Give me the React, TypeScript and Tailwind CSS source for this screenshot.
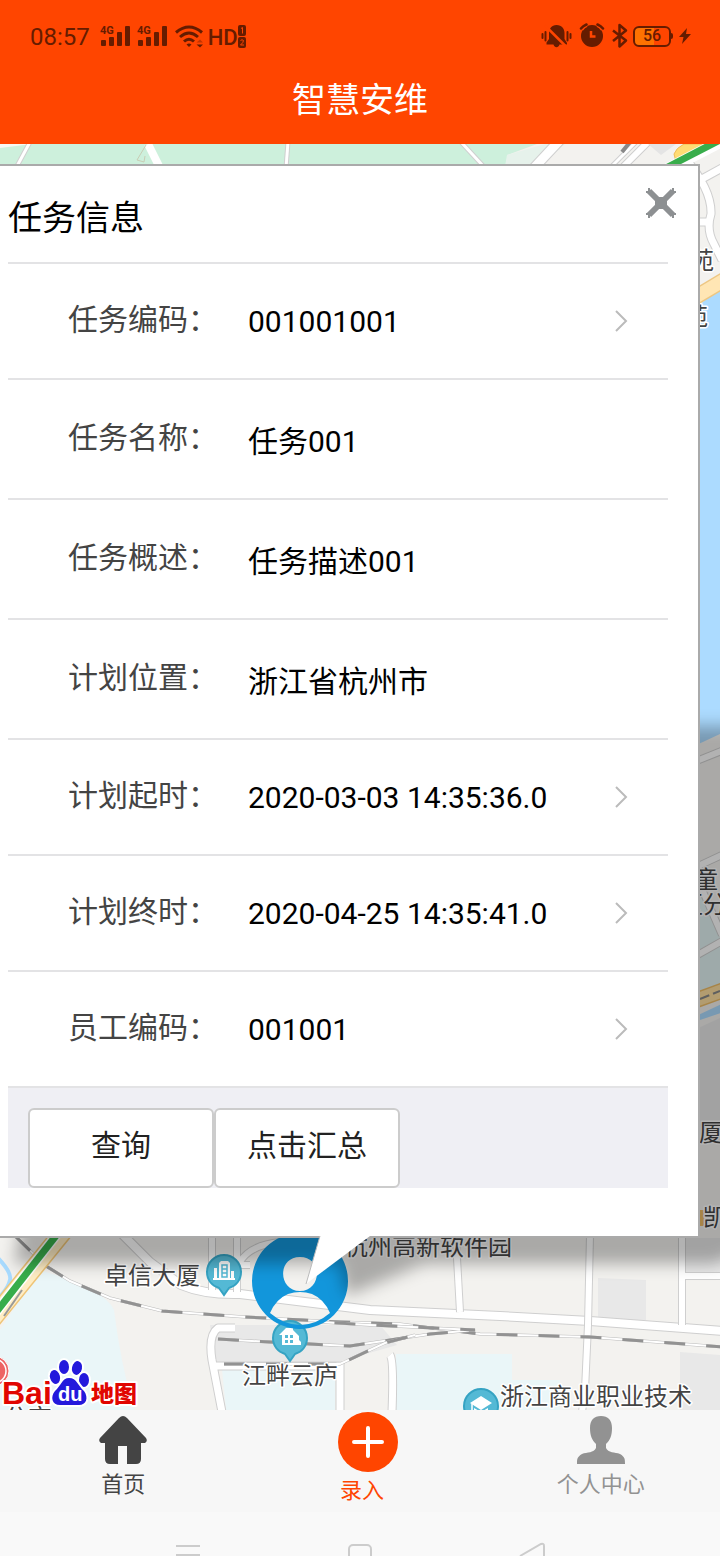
import { useState } from "react";

const FONT = "font-[Roboto,'Noto_Sans_CJK_SC',sans-serif]";

const fields = [
    { name: "taskCode", label: "任务编码：", value: "001001001", picker: true },
    { name: "taskName", label: "任务名称：", value: "任务001", picker: false },
    { name: "taskDesc", label: "任务概述：", value: "任务描述001", picker: false },
    { name: "location", label: "计划位置：", value: "浙江省杭州市", picker: false },
    { name: "startTime", label: "计划起时：", value: "2020-03-03 14:35:36.0", picker: true },
    { name: "endTime", label: "计划终时：", value: "2020-04-25 14:35:41.0", picker: true },
    { name: "staffCode", label: "员工编码：", value: "001001", picker: true },
];

const Signal = () => (
    <svg width="30" height="24" viewBox="0 0 30 24" fill="#661c00" aria-hidden="true">
        <text x="0" y="10" fontSize="11" fontWeight="700" fontFamily="Roboto">4G</text>
        <rect x="1" y="16" width="5" height="6" rx="1" />
        <rect x="9" y="13" width="5" height="9" rx="1" />
        <rect x="17" y="8" width="5" height="14" rx="1" />
        <rect x="25" y="2" width="5" height="20" rx="1" />
    </svg>
);

const StatusBar = () => (
    <div className="flex h-[72px] items-center justify-between pl-[30px] pr-[29px] text-[#661c00]">
        <div className="flex items-center">
            <span className="pt-0.5 text-2xl">08:57</span>
            <span className="ml-2.5 flex gap-[7px]">
                <Signal />
                <Signal />
            </span>
            <svg className="ml-2" width="29" height="24" viewBox="0 0 29 24" fill="none" stroke="#661c00" strokeWidth="3" aria-hidden="true">
                <path d="M1 8.5Q14 -2.500 27 8.500" />
                <path d="M5 13Q14 5 23 13" />
                <path d="M9 17.500Q14 13 19 17.500" />
                <path d="M14 23L11.500 20.500Q14 18.500 16.500 20.500Z" fill="#661c00" stroke="none" />
                <path d="M21.500 20.500H28L25 23.500Z" fill="#661c00" stroke="none" />
                <path d="M21.500 18.500H28L25 15.500Z" fill="#661c00" fillOpacity=".4" stroke="none" />
            </svg>
            <span className="ml-1 pt-0.5 text-[22px] font-medium">HD</span>
            <svg width="9" height="24" viewBox="0 0 9 24" fill="#661c00" aria-hidden="true">
                <rect width="8" height="11" y="1" rx="2" />
                <rect width="8" height="11" y="13" rx="2" />
                <path d="M3 4.500L4.500 3.500V9.500M2.500 16.500Q4 15 5.500 16.500Q5.500 18.500 2.500 21H6" stroke="#ff4500" strokeWidth="1" fill="none" />
            </svg>
        </div>
        <div className="flex items-center">
            <svg width="31" height="26" viewBox="0 0 31 26" fill="#661c00" aria-hidden="true">
                <path d="M15.500 2C21 2 23.500 6 23.500 10V16L26 20V21.500H18.500C17.500 25 13.500 25 12.500 21.500H5.500V19.500L8 16V10C8 6 10.500 2 15.500 2Z" />
                <path d="M4 2.500L24.500 23" stroke="#ff4500" strokeWidth="2.500" />
                <path d="M1.500 11V15M4.500 9V17.500M26.500 9V17.500M29.500 11V15" stroke="#661c00" strokeWidth="2" strokeLinecap="round" />
            </svg>
            <svg className="ml-[7px]" width="26" height="26" viewBox="0 0 26 26" fill="none" aria-hidden="true">
                <circle cx="13" cy="13" r="11" fill="#661c00" />
                <path d="M2 6Q4 3 7.500 1.500M24 6Q22 3 18.500 1.500" stroke="#ff4500" strokeWidth="5" />
                <path d="M2 5.500Q4 3 7.500 1.500M24 5.500Q22 3 18.500 1.500" stroke="#661c00" strokeWidth="2.500" strokeLinecap="round" />
                <path d="M12 8V13.500H16.500" stroke="#ff4500" strokeWidth="2.500" />
            </svg>
            <svg className="ml-1.5" width="18" height="26" viewBox="0 0 18 26" fill="none" stroke="#661c00" strokeWidth="2.500" aria-hidden="true">
                <path d="M2 7.500L15 17.500L8.500 23.500V2L15 7.500L2 18" strokeLinejoin="round" />
            </svg>
            <span className="ml-1 flex h-[21px] w-[38px] items-center justify-center rounded-md border-2 border-[#661c00] bg-linear-to-r from-[#ff7200] from-56% to-[#ff4500] to-56% text-[16px] font-medium leading-none">56</span>
            <span className="h-1.5 w-0.5 rounded-r bg-[#661c00]" />
            <svg className="ml-1.5" width="12" height="16" viewBox="0 0 12 16" fill="#661c00" aria-hidden="true">
                <path d="M8 0L0 9H4.500L3 16L12 6H7Z" />
            </svg>
        </div>
    </div>
);

// casing + fill for a plain street
const Road = ({ d, w = 12 }: { d: string; w?: number }) => (
    <g fill="none" strokeLinejoin="round">
        <path d={d} stroke="#cfcfcf" strokeWidth={w + 2} />
        <path d={d} stroke="#fff" strokeWidth={w} />
    </g>
);

const Rail = ({ d }: { d: string }) => (
    <g fill="none">
        <path d={d} stroke="#bbb" strokeWidth="3" />
        <path d={d} stroke="#fff" strokeWidth="2" />
        <path d={d} stroke="#929292" strokeWidth="3" strokeDasharray="21 21" />
    </g>
);

const Place = ({ x, y, children }: { x: number; y: number; children: string }) => (
    <text x={x} y={y} fontSize="24" fill="#444" stroke="#fff" strokeWidth="3" paintOrder="stroke" strokeLinejoin="round">{children}</text>
);

const Pin = ({ x, y, children }: { x: number; y: number; children: React.ReactNode }) => (
    <g transform={`translate(${x} ${y})`}>
        <path d="M-17 0A17 17 0 1 1 17 0C17 8 12 14 5 16L0 23L-5 16C-12 14 -17 8 -17 0Z" fill="#54b9d5" stroke="#35a3c3" strokeWidth="2" />
        <g fill="#fff">{children}</g>
    </g>
);

const MapCanvas = () => (
    <svg className="absolute inset-0 h-full w-full" viewBox="0 144 720 1266" preserveAspectRatio="xMaxYMax slice" role="img" aria-label="地图">
        <defs>
            <filter id="soft" x="-20%" y="-20%" width="140%" height="140%">
                <feGaussianBlur stdDeviation="8" />
            </filter>
        </defs>
        <rect y="144" width="720" height="1266" fill="#f3f2ef" />

        {/* north strip */}
        <path d="M0 144H537L507 155V166H0Z" fill="#cdf0dc" />
        <path d="M507 155L545 144H565L540 166H505Z" fill="#e6f2eb" />
        <path d="M0 144H32L0 148Z" fill="#f8f8f3" />
        <Road d="M30 142L16 168" w={3} />
        <path d="M148 144L161 170" stroke="#fff" strokeWidth="8" />
        <path d="M146 145L137 160L144 162L145 156" fill="none" stroke="#c8cdb5" />
        <Road d="M288 142L286 168" w={3} />
        <Road d="M461 142L485 168" w={3} />
        <Road d="M560 140L532 170" w={9} />
        <Road d="M638 140L608 170" w={3} />
        <path d="M630 142L622 152" stroke="#888" strokeWidth="4" />
        <Road d="M650 140L620 170" w={6} />
        <path d="M648 144H676L661 155Z" fill="#e4e4e4" />
        <path d="M674 154Q676 148 684 144H708L676 162Z" fill="#ffdc73" stroke="#eebc58" />
        <Road d="M685 158Q712 190 711 214Q706 230 714 244L722 260M700 180L722 168M698 222H710" w={7} />
        <path d="M662 172L720 142" stroke="#fff" strokeWidth="12" />
        <path d="M662 170L720 140" stroke="#38ad4b" strokeWidth="7" />
        <path d="M690 300L720 286V734L690 748Z" fill="#acdbff" />
        <path d="M690 314V290L720 276V286Z" fill="#f3f2ef" />
        <path d="M694 298L724 280" stroke="#edc783" strokeWidth="16" />
        <path d="M694 298L724 280" stroke="#ffe6b4" strokeWidth="13" />

        {/* east strip */}
        <path d="M694 863L720 938V1000H694Z" fill="#e2f3f3" />
        <Road d="M694 762L724 750M694 868L724 854M698 880L722 935M694 957L724 940" w={6} />
        <path d="M694 1001L724 990" stroke="#efbd67" strokeWidth="16" />
        <path d="M694 1001L724 990" stroke="#ffe0a0" strokeWidth="13" />
        <path d="M700 999L720 991" stroke="#888" strokeDasharray="10 4" strokeWidth="2" />
        <path d="M694 1017L724 1003V1012L694 1022Z" fill="#acdbff" />
        <path d="M694 1030L720 1018V1140H694Z" fill="#e8e8e8" />

        {/* south area */}
        <path d="M0 1330L40 1270Q106 1290 114 1310Q120 1360 134 1410H0Z" fill="#eaf6f8" />
        <path d="M210 1325H380L397 1345L345 1360L330 1364L215 1366Z" fill="#e8e8e8" />
        <path d="M222 1369H335V1410H226Z" fill="#eaf6f8" />
        <path d="M396 1354H512V1380H560V1410H396Z" fill="#eaf6f8" />
        <path d="M598 1278L646 1280V1320H598ZM680 1352L720 1355V1410H680ZM686 1238H720V1272H686Z" fill="#e8e8e8" />
        <path d="M-4 1256Q12 1272 10 1280Q8 1290 -4 1300" fill="none" stroke="#a8dbff" strokeWidth="4" />
        <Road d="M118 1230L150 1262L181 1285Q205 1295 240 1294L370 1310L500 1316L590 1321L724 1331" w={8} />
        <Road d="M212 1235V1290M237 1235V1292M212 1265H250M240 1262Q250 1245 280 1242" w={6} />
        <Road d="M456 1240L460 1312M590 1235L588 1325L585 1390L582 1412M682 1235V1325M682 1276H724" w={6} />
        <Road d="M235 1328H218Q208 1335 212 1360L222 1412M215 1366H342M340 1362V1412M390 1355Q394 1360 392 1412" w={7} />
        <Rail d="M15 1236L46 1266L70 1281L110 1298L162 1311L245 1317L340 1322L400 1324L480 1334L590 1337L724 1347" />
        <Rail d="M218 1339L270 1342L350 1346L430 1334L475 1330L370 1325L320 1322" />
        <Rail d="M224 1364H340L385 1343L415 1335" />
        <path d="M-10 1322L68 1226" stroke="#efc476" strokeWidth="19" />
        <path d="M-10 1322L68 1226" stroke="#ffedc4" strokeWidth="16" />
        <path d="M-10 1320L62 1228" stroke="#fff" strokeWidth="10" />
        <path d="M-10 1320L62 1228" stroke="#38ad4b" strokeWidth="7" />
        <path d="M4 1316L22 1290" stroke="#999" strokeWidth="2" />

        <Place x={690} y={269}>苑</Place>
        <Place x={684} y={325}>苑</Place>
        <Place x={694} y={888}>童</Place>
        <Place x={679} y={913}>区分</Place>
        <Place x={699} y={1141}>厦</Place>
        <path d="M698 1210H706V1226H698Z" fill="#efbd67" />
        <Place x={703} y={1226}>凯</Place>
        <Place x={104} y={1284}>卓信大厦</Place>
        <Place x={344} y={1255}>杭州高新软件园</Place>
        <Place x={242} y={1384}>江畔云庐</Place>
        <Place x={500} y={1405}>浙江商业职业技术</Place>
        <Place x={4} y={1426}>公交</Place>

        <Pin x={224} y={1272}>
            <path d="M-10 7V-4H-7V7ZM-5 7V-9L-3 -11H4L6 -9V7ZM7 7V-1H10V7ZM-11 6H11V8H-11Z" />
            <path d="M-2 -7H3V5H-2ZM-2 -3H3M-2 1H3" stroke="#54b9d5" strokeWidth="1.500" />
        </Pin>
        <Pin x={290} y={1338}>
            <path d="M-11 -3L-4 -10H3V-8L9 -2V2L11 4V7H-8V-3Z" />
            <path d="M-5 -3H-2V0H-5ZM0 -3H3V0H0ZM-5 2H-2V5H-5ZM0 2H3V5H0Z" fill="#54b9d5" />
        </Pin>
        <Pin x={481} y={1406}>
            <path d="M0 -10L11 -3L0 4L-11 -3ZM-7 2L0 6L7 2V10H-7Z" />
            <path d="M-9 -2V6" stroke="#fff" strokeWidth="1.500" />
        </Pin>
        <path d="M252 1281A48 48 0 1 0 348 1281A48 48 0 1 0 252 1281ZM300 1257C323 1257 322 1291 300 1291C278 1291 277 1257 300 1257ZM270 1313Q276 1299 288 1294Q300 1290 312 1294Q324 1299 330 1313Q316 1325 300 1325Q284 1325 270 1313Z" fill="#1296db" fillRule="evenodd" />

        {/* info window shadow */}
        <path d="M14 1264L34 1150H680V726H780V1230L716 1264H424L346 1296L340 1264Z" fill="#000" fillOpacity=".3" filter="url(#soft)" />

        {/* Baidu mark */}
        <circle cx="-6" cy="1371" r="15" fill="#ed6464" stroke="#fff" />
        <circle cx="-6" cy="1371" r="12" fill="none" stroke="#fff" strokeWidth="1.500" />
        <g stroke="#fff" strokeWidth="4" paintOrder="stroke" strokeLinejoin="round">
            <text x="2" y="1404" fontSize="32" fontWeight="700" fontFamily="Liberation Sans" fill="#e10601">Bai</text>
            <g fill="#2319dc">
                <ellipse cx="64" cy="1367" rx="5" ry="7" />
                <ellipse cx="77" cy="1368" rx="5" ry="7" transform="rotate(12 77 1368)" />
                <ellipse cx="55" cy="1377" rx="5" ry="7" transform="rotate(-15 55 1377)" />
                <ellipse cx="84" cy="1380" rx="5" ry="7" />
                <path d="M69 1378C77 1378 78 1386 84 1391C89 1398 86 1405 79 1405H60C52 1405 50 1397 55 1391C61 1386 62 1378 69 1378Z" />
            </g>
            <text x="91" y="1402" fontSize="23" fontWeight="900" fill="#e10601">地图</text>
        </g>
        <text x="58" y="1401" fontSize="20" fontWeight="700" fontFamily="Liberation Sans" fill="#fff">du</text>
    </svg>
);

const App = () => {
    const [open, setOpen] = useState(true);
    const [values, setValues] = useState<Record<string, string>>(
        Object.fromEntries(fields.map((f) => [f.name, f.value]))
    );

    return (
        <div className={`flex min-h-screen w-full flex-col overflow-hidden bg-[#f7f7f7] ${FONT}`}>
            <header className="bg-[#ff4500]">
                <StatusBar />
                <h1 className="flex h-[72px] items-center justify-center pb-4 text-[34px] leading-none text-white">智慧安维</h1>
            </header>

            <main className="relative pb-[172px] pr-5 pt-5">
                <MapCanvas />
                {open ? (
                    <section className="relative border-y-2 border-r-2 border-[#aaa] bg-white pb-12">
                        <div className="flex h-24 items-start justify-between pl-2 pr-[22px]">
                            <h2 className="pt-[35px] text-[34px] leading-[34px] text-black">任务信息</h2>
                            <button type="button" aria-label="关闭" onClick={() => setOpen(false)} className="mt-[22px]">
                                <svg width="30" height="30" viewBox="0 0 30 30" fill="none" stroke="#8d9092" strokeWidth="6">
                                    <path d="M3 3L27 27M27 3L3 27" />
                                    <path d="M3 0V6M0 4H6M27 0V6M24 4H30M3 24V30M0 26H6M27 24V30M24 26H30" strokeWidth="2" />
                                    <path d="M9 15H21M15 9V21" />
                                </svg>
                            </button>
                        </div>
                        <form onSubmit={(e) => e.preventDefault()} className="pl-2 pr-[30px]">
                            {fields.map((f) => (
                                <div
                                    key={f.name}
                                    className={f.picker ? "flex h-[116px] items-center border-t-2 border-[#e3e3e5] pl-[60px] pr-10" : "flex h-[120px] items-center border-t-2 border-[#e3e3e5] pl-[60px] pr-10"}
                                >
                                    <label htmlFor={f.name} className="w-[180px] shrink-0 pb-0.5 text-[30px] leading-10 text-[#444]">{f.label}</label>
                                    <input
                                        id={f.name}
                                        type="text"
                                        value={values[f.name]}
                                        onChange={(e) => setValues({ ...values, [f.name]: e.target.value })}
                                        className="h-12 min-w-0 flex-1 bg-transparent text-[30px] text-black outline-none"
                                    />
                                    {f.picker ? (
                                        <svg width="14" height="22" viewBox="0 0 14 22" fill="none" stroke="#bbb" strokeWidth="2" aria-hidden="true">
                                            <path d="M2 1L12 11L2 21" />
                                        </svg>
                                    ) : null}
                                </div>
                            ))}
                            <div className="flex border-t-2 border-[#e3e3e5] bg-[#efeff4] pl-5 pt-5">
                                <button type="submit" className="h-20 w-[186px] rounded-md border-2 border-[#ccc] bg-white pb-1.5 text-[30px] text-[#222]">查询</button>
                                <button type="button" className="h-20 w-[186px] rounded-md border-2 border-[#ccc] bg-white pb-1.5 text-[30px] text-[#222]">点击汇总</button>
                            </div>
                        </form>
                        {/* tail of the info window */}
                        <svg className="absolute left-[304px] top-full" width="68" height="50" viewBox="0 0 68 50" aria-hidden="true">
                            <path d="M16 0H66L2 48Z" fill="#fff" />
                            <path d="M16 0L2 48" stroke="#bbb" strokeWidth="1" />
                        </svg>
                    </section>
                ) : null}
            </main>

            <nav className="grid h-[102px] grid-cols-3 bg-[#f7f7f7] pl-1 text-[22px] leading-8">
                <a href="#home" className="flex flex-col items-center pt-1.5 text-[#444]">
                    <svg width="48" height="48" viewBox="0 0 48 48" fill="#444" aria-hidden="true">
                        <path d="M20 2Q24 -2 28 2L47 22Q49 25 46 27H42V43Q42 48 37 48H28V30H19V48H11Q6 48 6 43V27H2Q-1 25 1 22Z" />
                    </svg>
                    <span className="mt-[5px]">首页</span>
                </a>
                <a href="#entry" className="flex flex-col items-center pt-0.5 text-[#ff4500]">
                    <svg className="ml-3" width="60" height="60" viewBox="0 0 60 60" aria-hidden="true">
                        <circle cx="30" cy="30" r="30" fill="#ff4500" />
                        <path d="M16 30H44M30 16V44" stroke="#fff" strokeWidth="4" strokeLinecap="round" />
                    </svg>
                    <span className="mt-[3px]">录入</span>
                </a>
                <a href="#profile" className="flex flex-col items-center pt-1.5 text-[#929292]">
                    <svg width="48" height="48" viewBox="0 0 48 48" fill="#929292" aria-hidden="true">
                        <path d="M24 0C31 0 35 4 35 12C35 20 33 24 29 28V32C31 37 38 36 43 38C48 41 48 43 48 48H0C0 43 0 41 5 38C10 36 17 37 19 32V28C15 24 13 20 13 12C13 4 17 0 24 0Z" />
                    </svg>
                    <span className="mt-[5px]">个人中心</span>
                </a>
            </nav>

            <div className="flex h-11 items-end justify-between overflow-hidden bg-[#f9f9f9] px-[175px]">
                <svg width="26" height="14" viewBox="0 0 26 14" stroke="#ccc" strokeWidth="2" aria-hidden="true">
                    <path d="M1 4H25M1 13H25" />
                </svg>
                <svg width="26" height="14" viewBox="0 0 26 14" fill="none" stroke="#ccc" strokeWidth="2" aria-hidden="true">
                    <rect x="2" y="3" width="22" height="22" rx="4" />
                </svg>
                <svg width="26" height="14" viewBox="0 0 26 14" fill="none" stroke="#ccc" strokeWidth="2" aria-hidden="true">
                    <path d="M1 14L22 2Q25 1 25 4V14" />
                </svg>
            </div>
        </div>
    );
};

export default App;
